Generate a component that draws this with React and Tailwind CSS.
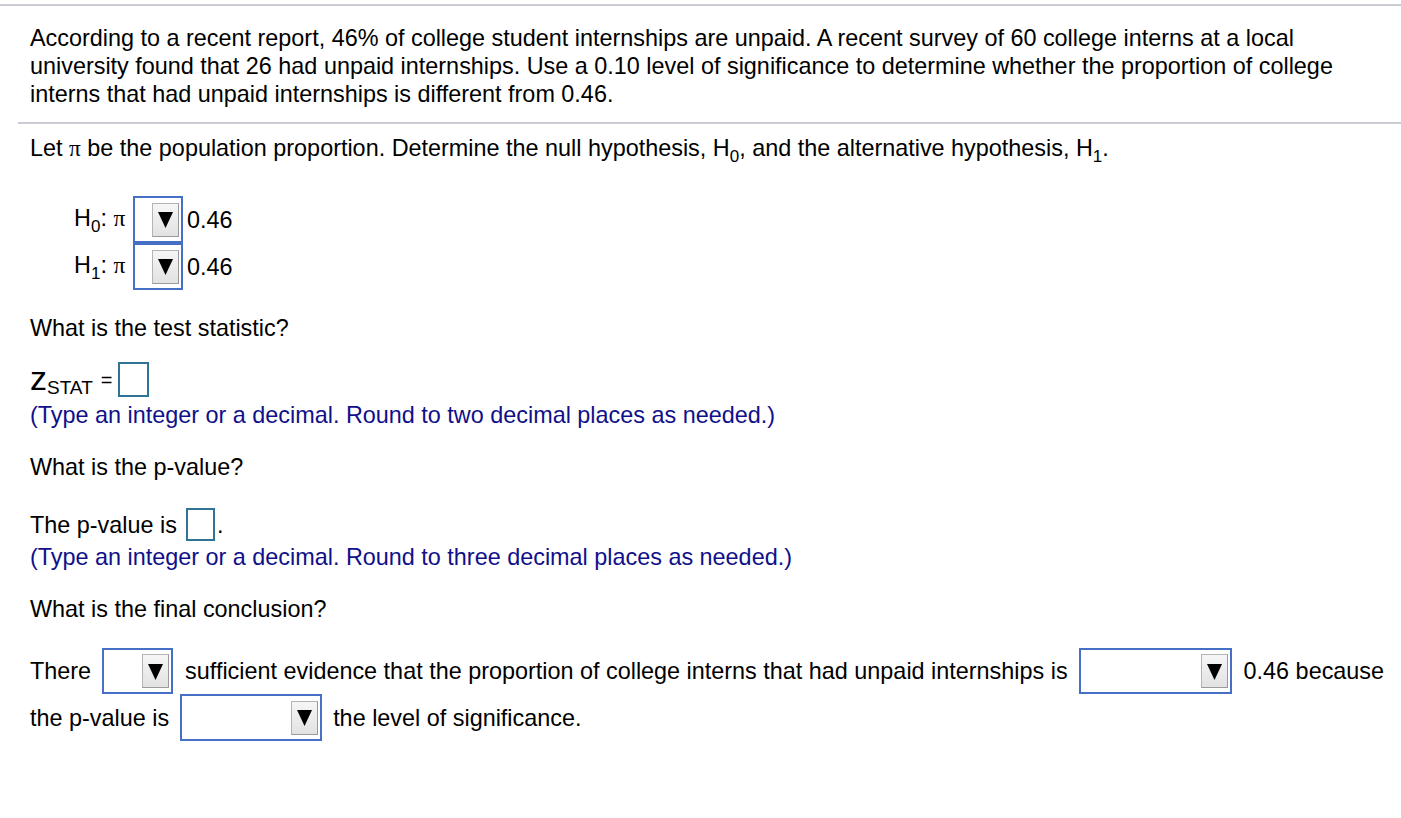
import React from "react";

function Caret() {
  return (
    <div className="flex h-[34px] w-[27px] items-center justify-center border border-[#b4b4b4] border-r-[#9a9a9a] border-b-[#9a9a9a] bg-linear-to-b from-[#f6f6f6] to-[#e2e2e2]">
      <svg width="15" height="17" viewBox="0 0 15 17">
        <polygon points="0,1 15,1 7.5,17" fill="#000" />
      </svg>
    </div>
  );
}

function Select({ w, h = 47, className = "" }) {
  return (
    <div
      className={`flex shrink-0 items-center justify-end border-2 border-[#4570c6] bg-white pr-[2px] ${className}`}
      style={{ width: w, height: h }}
    >
      <Caret />
    </div>
  );
}

function Pi() {
  return <span className="font-['Liberation_Serif',serif]">π</span>;
}

function Sub({ children }) {
  return <span className="align-[-6px] text-[17px] leading-none">{children}</span>;
}

function Hyp({ n }) {
  return (
    <div className="flex h-[47px] items-center pl-[74px]">
      <span className="w-[59px]">
        H<Sub>{n}</Sub>: <Pi />
      </span>
      <Select w={50} />
      <span className="ml-[4px]">0.46</span>
    </div>
  );
}

function AnswerBox({ w, h }) {
  return <div className="shrink-0 border-2 border-[#2f7397] bg-white" style={{ width: w, height: h }} />;
}

export default function App() {
  return (
    <div className="min-h-screen bg-white pb-10 font-['Liberation_Sans',Arial,sans-serif] text-[23.4px] leading-[28px] text-black">
      <div className="mt-[4px] h-[2px] bg-[#cbccd6]" />

      <div className="mt-[18px] pl-[30px]">
        <div>According to a recent report, 46% of college student internships are unpaid. A recent survey of 60 college interns at a local</div>
        <div>university found that 26 had unpaid internships. Use a 0.10 level of significance to determine whether the proportion of college</div>
        <div>interns that had unpaid internships is different from 0.46.</div>
      </div>

      <div className="ml-[18px] mt-[14px] h-[2px] bg-[#cbccd6]" />

      <div className="mt-[10px] h-[28px] pl-[30px]">
        Let <Pi /> be the population proportion. Determine the null hypothesis, H<Sub>0</Sub>, and the
        alternative hypothesis, H<Sub>1</Sub>.
      </div>

      <div className="mt-[34px]">
        <Hyp n="0" />
        <Hyp n="1" />
      </div>

      <div className="mt-[24px] pl-[30px]">What is the test statistic?</div>

      <div className="mt-[20px] flex h-[35px] items-end pl-[30px]">
        <span className="mb-[2px] text-[34px] leading-none">z</span>
        <span className="mb-[0px] text-[19px] leading-none">STAT</span>
        <span className="mb-[7px] ml-[8px] text-[20px] leading-none">=</span>
        <span className="ml-[6px]">
          <AnswerBox w={31} h={35} />
        </span>
      </div>
      <div className="mt-[4px] pl-[30px] text-[#10108a]">
        (Type an integer or a decimal. Round to two decimal places as needed.)
      </div>

      <div className="mt-[24px] pl-[30px]">What is the p-value?</div>

      <div className="mt-[27px] flex h-[33px] items-center pl-[30px]">
        <span>The p-value is</span>
        <span className="ml-[9px]">
          <AnswerBox w={29} h={33} />
        </span>
        <span className="ml-[2px]">.</span>
      </div>
      <div className="mt-[2px] pl-[30px] text-[#10108a]">
        (Type an integer or a decimal. Round to three decimal places as needed.)
      </div>

      <div className="mt-[24px] pl-[30px]">What is the final conclusion?</div>

      <div className="mt-[25px] flex h-[46px] items-center whitespace-nowrap pl-[30px]">
        <span>There</span>
        <Select w={71} h={46} className="ml-[11px]" />
        <span className="ml-[12px]">sufficient evidence that the proportion of college interns that had unpaid internships is</span>
        <Select w={153} h={46} className="ml-[11px]" />
        <span className="ml-[12px]">0.46 because</span>
      </div>
      <div className="flex h-[47px] items-center whitespace-nowrap pl-[30px]">
        <span>the p-value is</span>
        <Select w={142} h={47} className="ml-[11px]" />
        <span className="ml-[11px]">the level of significance.</span>
      </div>
    </div>
  );
}
